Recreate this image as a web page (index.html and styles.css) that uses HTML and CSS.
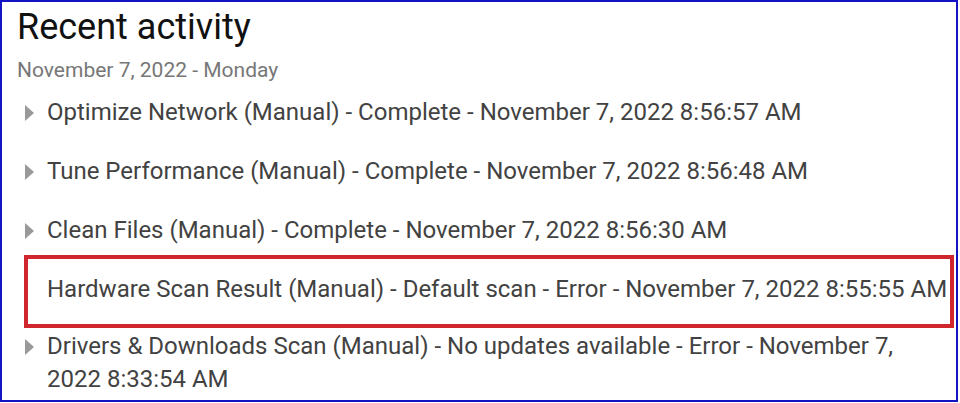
FILE: index.html
```html
<!DOCTYPE html>
<html>
<head>
<meta charset="utf-8">
<link rel="stylesheet" href="styles.css">
</head>
<body>
<div class="frame">
  <h1 class="title">Recent activity</h1>
  <div class="date">November 7, 2022 - Monday</div>
  <ul class="list">
    <li class="item"><span class="caret"></span><span class="text">Optimize Network (Manual) - Complete - November 7, 2022 8:56:57 AM</span></li>
    <li class="item"><span class="caret"></span><span class="text">Tune Performance (Manual) - Complete - November 7, 2022 8:56:48 AM</span></li>
    <li class="item"><span class="caret"></span><span class="text">Clean Files (Manual) - Complete - November 7, 2022 8:56:30 AM</span></li>
    <li class="item item-marked"><span class="text">Hardware Scan Result (Manual) - Default scan - Error - November 7, 2022 8:55:55 AM</span></li>
    <li class="item"><span class="caret"></span><span class="text">Drivers &amp; Downloads Scan (Manual) - No updates available - Error - November 7, 2022 8:33:54 AM</span></li>
  </ul>
</div>
</body>
</html>
```
FILE: styles.css
```css
html, body {
  margin: 0;
  padding: 0;
  background: #ffffff;
}
body {
  font-family: Roboto, "Liberation Sans", sans-serif;
}
.frame {
  box-sizing: border-box;
  width: 958px;
  height: 402px;
  border: 2px solid #1414c4;
  padding: 0 0 0 15px;
  overflow: hidden;
}
.title {
  margin: 0;
  padding-top: 4px;
  font-size: 36px;
  font-weight: 400;
  line-height: 42px;
  color: #111111;
}
.date {
  margin-top: 10px;
  font-size: 21px;
  line-height: 24px;
  color: #777777;
}
.list {
  list-style: none;
  margin: 0;
  padding: 1px 0 0;
}
.item {
  display: flex;
  align-items: flex-start;
  padding: 13px 0;
  font-size: 24px;
  line-height: 33px;
  color: #424242;
}
.caret {
  flex: none;
  width: 0;
  height: 0;
  margin: 9px 13px 0 8px;
  border-top: 8px solid transparent;
  border-bottom: 8px solid transparent;
  border-left: 9px solid #999999;
}
.text {
  padding-right: 40px;
}
.item-marked {
  margin: -5px 0 -11px 7px;
  width: 930px;
  box-sizing: border-box;
  border: 4px solid #d0262e;
  padding: 14px 0 18px 19px;
}
.item-marked .text {
  padding-right: 0;
}
```
